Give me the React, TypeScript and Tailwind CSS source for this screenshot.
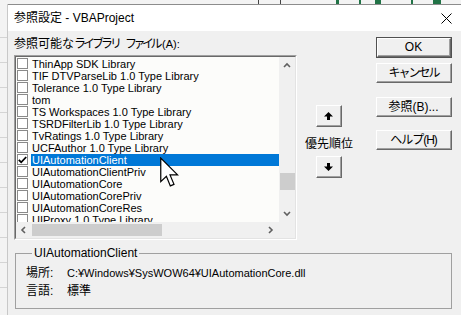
import React from "react";

const items = [
  "ThinApp SDK Library",
  "TIF DTVParseLib 1.0 Type Library",
  "Tolerance 1.0 Type Library",
  "tom",
  "TS Workspaces 1.0 Type Library",
  "TSRDFilterLib 1.0 Type Library",
  "TvRatings 1.0 Type Library",
  "UCFAuthor 1.0 Type Library",
  "UIAutomationClient",
  "UIAutomationClientPriv",
  "UIAutomationCore",
  "UIAutomationCorePriv",
  "UIAutomationCoreRes",
  "UIProxy 1.0 Type Library",
];

function Chevron({ dir }: { dir: "up" | "down" | "left" | "right" }) {
  const pts: Record<string, string> = {
    up: "1,5 4,2 7,5",
    down: "1,2 4,5 7,2",
    left: "5,1 2,4 5,7",
    right: "2,1 5,4 2,7",
  };
  return (
    <svg width="8" height="8" viewBox="0 0 8 8">
      <polyline points={pts[dir]} fill="none" stroke="#606060" strokeWidth="1.6" />
    </svg>
  );
}

function Btn({ children, def = false }: { children: React.ReactNode; def?: boolean }) {
  return (
    <div
      className={
        def
          ? "w-[76px] h-[21px] border border-[#505050] flex"
          : "w-[76px] h-[20px] flex"
      }
    >
      <div className="flex-1 flex border-t border-l border-t-white border-l-white border-r border-b border-r-[#696969] border-b-[#696969]">
        <div className="flex-1 flex items-center justify-center bg-[#f0f0f0] border-r border-b border-r-[#a0a0a0] border-b-[#a0a0a0] text-[12px] leading-[14px]">
          {children}
        </div>
      </div>
    </div>
  );
}

function ArrowBtn({ up }: { up: boolean }) {
  return (
    <div className="w-[26px] h-[22px] flex border-t border-l border-t-white border-l-white border-r border-b border-r-[#696969] border-b-[#696969]">
      <div className="flex-1 flex items-center justify-center bg-[#f0f0f0] border-r border-b border-r-[#a0a0a0] border-b-[#a0a0a0]">
        <svg width="9" height="8" viewBox="0 0 9 8">
          {up ? (
            <path d="M4.5 0 L9 4.5 L6 4.5 L6 8 L3 8 L3 4.5 L0 4.5 Z" fill="#000" />
          ) : (
            <path d="M4.5 8 L9 3.5 L6 3.5 L6 0 L3 0 L3 3.5 L0 3.5 Z" fill="#000" />
          )}
        </svg>
      </div>
    </div>
  );
}

function Checkbox({ checked }: { checked: boolean }) {
  return (
    <div className="w-[11px] h-[11px] border border-[#8a8a8a] bg-white flex items-center justify-center shrink-0">
      {checked && (
        <svg width="9" height="8" viewBox="0 0 9 8">
          <polyline points="0.8,3.8 3.2,6.3 8.2,1" fill="none" stroke="#000" strokeWidth="1.8" />
        </svg>
      )}
    </div>
  );
}

export default function App() {
  return (
    <div className="w-[461px] h-[315px] overflow-hidden bg-[#f3f3f3] flex flex-col relative font-['Liberation_Sans','Noto_Sans_CJK_JP',sans-serif] text-black">
      {/* excel top strip */}
      <div className="h-[4px] flex bg-[#f3f3f3] shrink-0">
        <div className="w-[258px]" />
        <div className="w-[1px] bg-[#444]" />
        <div className="w-[21px]" />
        <div className="w-[1px] bg-[#444]" />
        <div className="w-[55px]" />
        <div className="w-[3px] bg-[#217346]" />
        <div className="w-[20px]" />
        <div className="w-[2px] bg-[#217346]" />
        <div className="w-[14px]" />
        <div className="w-[6px] bg-[#217346]" />
        <div className="w-[30px]" />
        <div className="w-[2px] bg-[#217346]" />
        <div className="w-[20px]" />
        <div className="w-[8px] bg-[#217346]" />
      </div>
      <div className="flex flex-1 min-h-0">
        {/* excel left strip */}
        <div className="w-[8px] shrink-0 flex flex-col border-r border-[#c8c8c8]">
          <div className="h-[34px] border-b border-[#d4d4d4]" />
          <div className="h-[25px] border-b border-[#d4d4d4]" />
          <div className="h-[25px] border-b border-[#d4d4d4]" />
          <div className="h-[25px] border-b border-[#d4d4d4]" />
          <div className="h-[25px] border-b border-[#d4d4d4]" />
          <div className="h-[25px] border-b border-[#d4d4d4]" />
          <div className="h-[25px] border-b border-[#d4d4d4]" />
          <div className="h-[25px] border-b border-[#d4d4d4]" />
          <div className="h-[25px] border-b border-[#d4d4d4]" />
          <div className="h-[25px] border-b border-[#d4d4d4]" />
          <div className="h-[25px] border-b border-[#d4d4d4]" />
        </div>
        {/* dialog */}
        <div className="flex-1 flex flex-col border-t border-[#8c8c8c] bg-[#f0f0f0] min-w-0">
          {/* title bar */}
          <div className="h-[26px] bg-white flex items-center pl-[6px] pr-[9px] shrink-0">
            <div className="text-[12px] leading-[14px] flex-1">参照設定 - VBAProject</div>
            <svg width="11" height="11" viewBox="0 0 11 11">
              <path d="M0.5 0.5 L10.5 10.5 M10.5 0.5 L0.5 10.5" stroke="#000" strokeWidth="1" />
            </svg>
          </div>
          {/* body */}
          <div className="flex flex-col pl-[6px] pt-[6px]">
            <div className="flex">
              {/* left column */}
              <div className="w-[283px] flex flex-col">
                <div className="text-[12px] leading-[14px] whitespace-nowrap flex">
                  <span>参照可能な</span>
                  <span className="tracking-[-3px]">ライブラリ</span>
                  <span className="ml-[6px] tracking-[-3.5px]">ファイル</span>
                  <span className="ml-[3px] text-[11px]">(A):</span>
                </div>
                <div className="mt-[4px] h-[185px] flex flex-col border-t border-l border-t-[#a0a0a0] border-l-[#a0a0a0] border-r border-b border-r-white border-b-white">
                  <div className="flex-1 flex flex-col border-t border-l border-t-[#696969] border-l-[#696969] border-r border-b border-r-[#e3e3e3] border-b-[#e3e3e3] bg-[#fcfcfa] min-h-0">
                    <div className="flex flex-1 min-h-0">
                      <div className="flex-1 overflow-hidden flex flex-col pt-[1px]">
                        {items.map((it, i) => (
                          <div key={it} className="h-[12px] flex items-start pl-[1px] shrink-0">
                            <Checkbox checked={i === 8} />
                            <div
                              className={
                                i === 8
                                  ? "ml-[3px] flex-1 bg-[#0078d7] text-white text-[11px] leading-[12px] whitespace-nowrap pl-[1px]"
                                  : "ml-[3px] flex-1 text-[11px] leading-[12px] whitespace-nowrap pl-[1px]"
                              }
                            >
                              {it}
                            </div>
                          </div>
                        ))}
                      </div>
                      {/* vertical scrollbar */}
                      <div className="w-[16px] bg-[#f0f0f0] flex flex-col items-center">
                        <div className="h-[17px] flex items-center justify-center">
                          <Chevron dir="up" />
                        </div>
                        <div className="h-[99px]" />
                        <div className="w-[15px] h-[17px] bg-[#cdcdcd]" />
                        <div className="flex-1" />
                        <div className="h-[17px] flex items-center justify-center">
                          <Chevron dir="down" />
                        </div>
                      </div>
                    </div>
                    {/* horizontal scrollbar */}
                    <div className="h-[16px] flex bg-[#f0f0f0] shrink-0">
                      <div className="w-[16px] flex items-center justify-center">
                        <Chevron dir="left" />
                      </div>
                      <div className="w-[130px] my-[2px] bg-[#cdcdcd]" />
                      <div className="flex-1" />
                      <div className="w-[16px] flex items-center justify-center">
                        <Chevron dir="right" />
                      </div>
                      <div className="w-[16px] bg-[#f0f0f0]" />
                    </div>
                  </div>
                </div>
              </div>
              {/* middle column */}
              <div className="w-[64px] flex flex-col items-center pt-[68px]">
                <ArrowBtn up />
                <div className="mt-[10px] text-[12px] leading-[14px] whitespace-nowrap">優先順位</div>
                <div className="mt-[5px]">
                  <ArrowBtn up={false} />
                </div>
              </div>
              {/* right column */}
              <div className="ml-[15px] flex flex-col">
                <Btn def>OK</Btn>
                <div className="mt-[5px]">
                  <Btn>
                    <span className="tracking-[-2px]">キャンセル</span>
                  </Btn>
                </div>
                <div className="mt-[14px]">
                  <Btn>参照(B)...</Btn>
                </div>
                <div className="mt-[13px]">
                  <Btn>
                    <span className="tracking-[-1px]">ヘルプ(H)</span>
                  </Btn>
                </div>
              </div>
            </div>
            {/* group box */}
            <fieldset className="mt-[6px] ml-[1px] w-[437px] border border-[#a0a0a0] pl-[10px] pb-[10px]">
              <legend className="ml-[6px] px-[2px] text-[12px] leading-[14px]">UIAutomationClient</legend>
              <div className="flex pt-[6px] text-[12px] leading-[14px]">
                <div className="w-[41px]">場所:</div>
                <div className="text-[11px] whitespace-nowrap">C:¥Windows¥SysWOW64¥UIAutomationCore.dll</div>
              </div>
              <div className="flex mt-[4px] text-[12px] leading-[14px]">
                <div className="w-[41px]">言語:</div>
                <div>標準</div>
              </div>
            </fieldset>
          </div>
        </div>
      </div>
      {/* mouse cursor */}
      <div className="absolute left-[160px] top-[157px]">
        <svg width="19" height="31" viewBox="0 0 12.5 20">
          <path
            d="M0.5 0.5 L0.5 16 L4.2 12.5 L6.8 18.8 L9.2 17.8 L6.6 11.6 L11.6 11.6 Z"
            fill="#fff"
            stroke="#000"
            strokeWidth="0.8"
            strokeLinejoin="miter"
          />
        </svg>
      </div>
    </div>
  );
}
